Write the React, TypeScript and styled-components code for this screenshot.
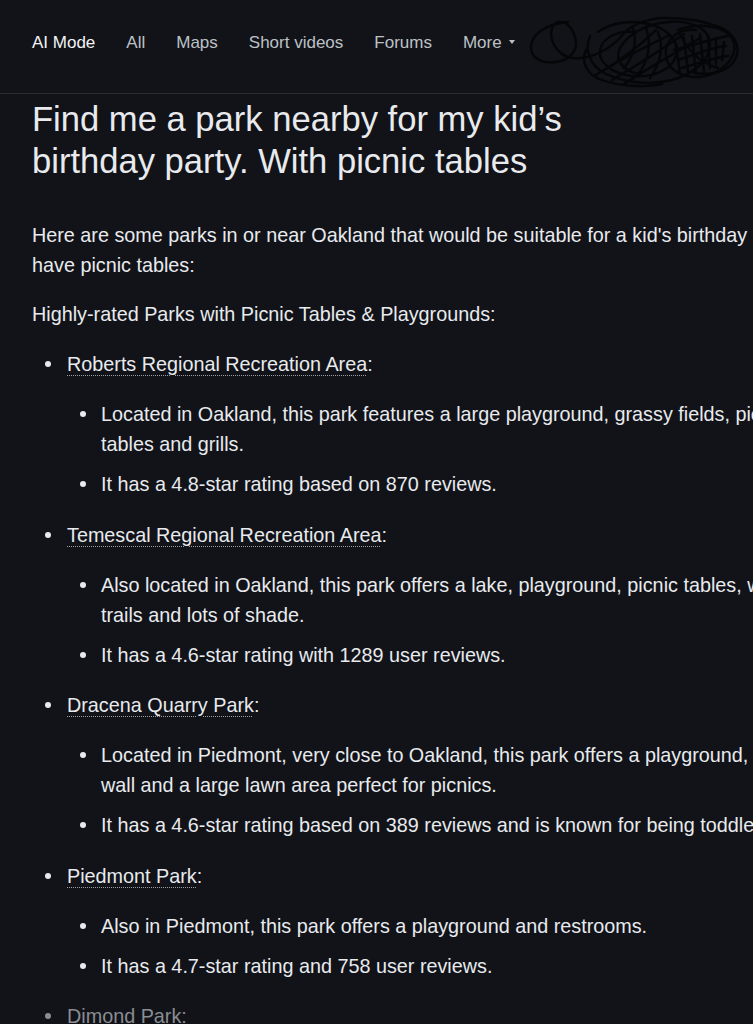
import React from "react";
import styled, { createGlobalStyle } from "styled-components";

const GlobalStyle = createGlobalStyle`
  html, body {
    margin: 0;
    padding: 0;
    background: #111319;
    overflow: hidden;
  }
  body {
    font-family: "Liberation Sans", Arial, sans-serif;
    color: #e8eaed;
  }
`;

const Page = styled.div`
  width: 753px;
  min-height: 1024px;
  overflow: hidden;
  background: #111319;
`;

const Header = styled.nav`
  position: relative;
  height: 86px;
  padding: 0 0 7px 32px;
  display: flex;
  align-items: center;
  gap: 31px;
  border-bottom: 1px solid #2a2d34;
`;

const Tab = styled.span<{ $active?: boolean }>`
  font-size: 17px;
  color: ${(p) => (p.$active ? "#f1f3f4" : "#bdc1c6")};
  white-space: nowrap;
  display: flex;
  align-items: center;
  gap: 7px;
`;

const Caret = styled.span`
  width: 0;
  height: 0;
  border-left: 3.5px solid transparent;
  border-right: 3.5px solid transparent;
  border-top: 4px solid #bdc1c6;
  margin-top: -2px;
`;

const Scribble = styled.svg`
  position: absolute;
  left: 528px;
  top: 10px;
`;

const Main = styled.main`
  width: 806px;
  padding: 0 0 0 32px;
`;

const Title = styled.h1`
  margin: 4px 0 0;
  max-width: 600px;
  font-size: 34.6px;
  line-height: 42px;
  font-weight: 400;
  color: #e8eaed;
`;

const Para = styled.p<{ $top: number }>`
  margin: ${(p) => p.$top}px 0 0;
  font-size: 19.8px;
  line-height: 30px;
`;

const List = styled.ul<{ $nested?: boolean }>`
  margin: 20px 0 0;
  padding-left: ${(p) => (p.$nested ? "34px" : "35px")};
  list-style: none;
  font-size: 19.8px;
  line-height: 30px;
`;

const Item = styled.li<{ $nested?: boolean; $faded?: boolean }>`
  position: relative;
  margin-top: ${(p) => (p.$nested ? "10.3px" : "20.3px")};
  color: ${(p) => (p.$faded ? "#8a8d93" : "#e8eaed")};
  &:first-child {
    margin-top: 0;
  }
  &::before {
    content: "";
    position: absolute;
    left: ${(p) => (p.$nested ? "-21px" : "-22px")};
    top: 12px;
    width: 6px;
    height: 6px;
    border-radius: 50%;
    background: currentColor;
  }
`;

const ParkName = styled.span`
  text-decoration: underline dotted #9aa0a6;
  text-decoration-thickness: 1px;
  text-underline-offset: 4px;
`;

type Park = { name: string; notes: string[]; faded?: boolean };

const parks: Park[] = [
  {
    name: "Roberts Regional Recreation Area",
    notes: [
      "Located in Oakland, this park features a large playground, grassy fields, picnic tables and grills.",
      "It has a 4.8-star rating based on 870 reviews.",
    ],
  },
  {
    name: "Temescal Regional Recreation Area",
    notes: [
      "Also located in Oakland, this park offers a lake, playground, picnic tables, walking trails and lots of shade.",
      "It has a 4.6-star rating with 1289 user reviews.",
    ],
  },
  {
    name: "Dracena Quarry Park",
    notes: [
      "Located in Piedmont, very close to Oakland, this park offers a playground, climbing wall and a large lawn area perfect for picnics.",
      "It has a 4.6-star rating based on 389 reviews and is known for being toddler-friendly.",
    ],
  },
  {
    name: "Piedmont Park",
    notes: [
      "Also in Piedmont, this park offers a playground and restrooms.",
      "It has a 4.7-star rating and 758 user reviews.",
    ],
  },
  { name: "Dimond Park", notes: [], faded: true },
];

function ScribbleMark() {
  return (
    <Scribble width="220" height="78" viewBox="0 0 220 78" fill="none" stroke="#050608" strokeWidth="2.4" strokeLinejoin="round" strokeLinecap="round">
      <path d="M40 12 C18 14 4 24 3 36 C2 48 14 54 28 52 C44 50 52 38 46 24 C40 10 28 8 24 18 C20 30 30 46 44 48 C62 50 80 40 92 28 C100 16 118 8 138 8 C160 8 180 12 194 18 C210 26 214 42 204 54 C194 64 178 66 164 62" />
      <path d="M62 26 C56 40 62 56 78 64 C96 72 120 76 144 70 C166 64 182 50 182 34 C182 18 162 10 140 12 C118 14 100 24 92 38 C86 50 96 62 112 64" />
      <path d="M70 22 C84 12 104 10 120 14 C140 18 152 32 148 46 C144 60 124 68 104 66 C84 64 70 52 72 40 C74 28 90 20 106 22" />
      <path d="M66 66 C90 52 112 36 128 20 M76 60 C96 48 118 36 140 26 M84 70 C108 56 130 42 156 24 M96 74 C120 58 146 44 172 28" />
      <path d="M150 20 C172 12 196 16 204 28 C212 42 200 60 178 66 C158 70 140 62 138 46 C136 30 150 18 168 20" />
      <path d="M156 28 L160 62 M164 26 L168 64 M172 24 L176 62 M180 26 L182 58 M148 34 L152 64 M188 28 L188 54 M196 32 L194 50" />
      <path d="M152 24 C160 40 170 52 190 58 M150 50 C164 46 180 38 198 36 M146 40 C162 36 180 30 200 26 M154 58 C168 54 184 48 200 46" />
      <path d="M58 40 C52 52 60 66 74 70 C90 76 116 78 134 74" />
      <path d="M104 16 C110 30 106 46 96 58 M118 18 C124 34 120 52 110 64 M130 22 C136 38 132 54 122 68" />
    </Scribble>
  );
}

export default function App() {
  return (
    <Page>
      <GlobalStyle />
      <Header>
        <Tab $active>AI Mode</Tab>
        <Tab>All</Tab>
        <Tab>Maps</Tab>
        <Tab>Short videos</Tab>
        <Tab>Forums</Tab>
        <Tab>
          More <Caret />
        </Tab>
        <ScribbleMark />
      </Header>
      <Main>
        <Title>Find me a park nearby for my kid’s birthday party. With picnic tables</Title>
        <Para $top={38}>
          Here are some parks in or near Oakland that would be suitable for a kid's birthday party and have picnic tables:
        </Para>
        <Para $top={19}>Highly-rated Parks with Picnic Tables &amp; Playgrounds:</Para>
        <List>
          {parks.map((park) => (
            <Item key={park.name} $faded={park.faded}>
              <ParkName>{park.name}</ParkName>:
              {park.notes.length > 0 && (
                <List $nested>
                  {park.notes.map((note) => (
                    <Item $nested key={note}>
                      {note}
                    </Item>
                  ))}
                </List>
              )}
            </Item>
          ))}
        </List>
      </Main>
    </Page>
  );
}
